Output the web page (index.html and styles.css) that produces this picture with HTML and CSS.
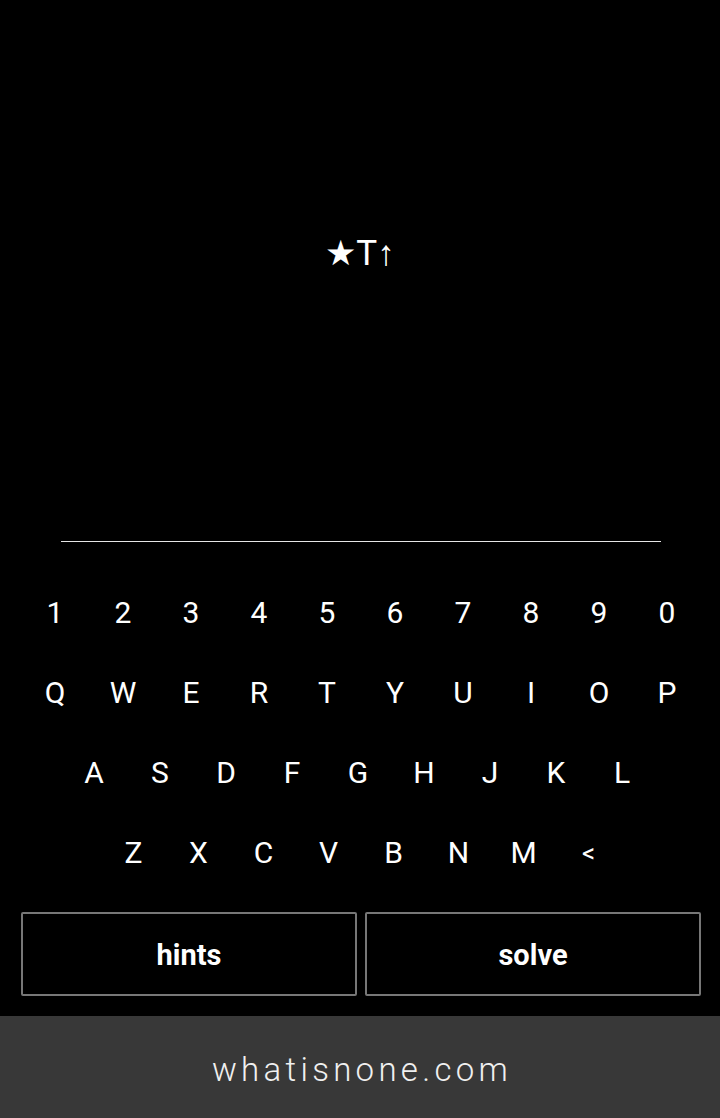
FILE: index.html
```html
<!DOCTYPE html>
<html lang="en">
<head>
<meta charset="utf-8">
<title>whatisnone</title>
<link rel="stylesheet" href="styles.css">
</head>
<body>
<div class="page">
  <div class="display"><span class="puzzle">★T↑</span></div>
  <div class="rule"></div>
  <div class="keyboard">
    <div class="row row-num">
      <span class="key">1</span><span class="key">2</span><span class="key">3</span><span class="key">4</span><span class="key">5</span><span class="key">6</span><span class="key">7</span><span class="key">8</span><span class="key">9</span><span class="key">0</span>
    </div>
    <div class="row row-top">
      <span class="key">Q</span><span class="key">W</span><span class="key">E</span><span class="key">R</span><span class="key">T</span><span class="key">Y</span><span class="key">U</span><span class="key">I</span><span class="key">O</span><span class="key">P</span>
    </div>
    <div class="row row-mid">
      <span class="key">A</span><span class="key">S</span><span class="key">D</span><span class="key">F</span><span class="key">G</span><span class="key">H</span><span class="key">J</span><span class="key">K</span><span class="key">L</span>
    </div>
    <div class="row row-bot">
      <span class="key">Z</span><span class="key">X</span><span class="key">C</span><span class="key">V</span><span class="key">B</span><span class="key">N</span><span class="key">M</span><span class="key key-back">&lt;</span>
    </div>
  </div>
  <div class="actions">
    <button class="btn">hints</button>
    <button class="btn">solve</button>
  </div>
  <div class="footer"><span class="site">whatisnone.com</span></div>
</div>
</body>
</html>
```

FILE: styles.css
```css
html, body {
  margin: 0;
  padding: 0;
  background: #000;
}
body {
  color: #fff;
  font-family: Roboto, "Liberation Sans", sans-serif;
}
.page {
  width: 720px;
  height: 1118px;
  display: flex;
  flex-direction: column;
}
.display {
  height: 541px;
  box-sizing: border-box;
  padding-bottom: 34px;
  display: flex;
  align-items: center;
  justify-content: center;
}
.puzzle {
  font-size: 35px;
  line-height: 1;
}
.rule {
  height: 1px;
  margin: 0 59px 0 61px;
  background: #e6e6e6;
}
.keyboard {
  padding-top: 31px;
  display: flex;
  flex-direction: column;
}
.row {
  height: 80px;
  display: flex;
  justify-content: center;
  align-items: center;
}
.row-num, .row-top, .row-bot { padding-left: 2px; }
.row-mid { padding-right: 4px; }
.key {
  width: 68px;
  text-align: center;
  font-size: 30px;
  line-height: 1;
}
.row-mid .key { width: 66px; }
.row-bot .key { width: 65px; }
.key-back { font-size: 26px; }
.actions {
  margin-top: 19px;
  padding: 0 19px 0 21px;
  display: flex;
  gap: 8px;
}
.btn {
  flex: 1;
  height: 84px;
  padding: 2px 0 0;
  background: #000;
  color: #fff;
  border: 2px solid #777;
  border-radius: 2px;
  font-family: Roboto, "Liberation Sans", sans-serif;
  font-weight: 700;
  font-size: 29px;
}
.footer {
  margin-top: 20px;
  flex: 1;
  background: #383838;
  display: flex;
  align-items: center;
  justify-content: center;
  padding-top: 4px;
}
.site {
  font-size: 33px;
  font-weight: 300;
  letter-spacing: 4.3px;
  color: #f0f0f0;
  margin-right: -4px;
}
```
